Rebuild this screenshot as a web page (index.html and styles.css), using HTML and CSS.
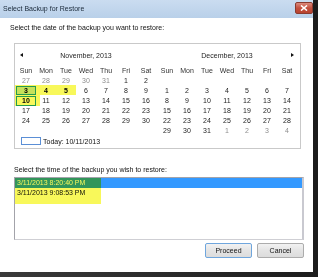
FILE: index.html
```html
<!DOCTYPE html>
<html lang="en">
<head>
    <meta charset="UTF-8">
    <title>Select Backup for Restore</title>
    <link rel="stylesheet" href="styles.css">
</head>
<body>

<div class="window">
    <div class="titlebar">
        <span class="title">Select Backup for Restore</span>
        <button class="close" aria-label="Close">
            <svg width="8" height="6" viewBox="0 0 8 6"><path d="M1 0.5 L7 5.5 M7 0.5 L1 5.5" stroke="#fff" stroke-width="1.6"/></svg>
        </button>
    </div>

    <div class="content">
        <p class="label label-date">Select the date of the backup you want to restore:</p>

        <div class="calendar">
            <div class="months">
                <div class="month">
                    <div class="month-head">
                        <span class="arrow arrow-left"></span>
                        <span class="month-name">November, 2013</span>
                        <span></span>
                    </div>
                    <div class="days">
                        <span class="dow">Sun</span><span class="dow">Mon</span><span class="dow">Tue</span><span class="dow">Wed</span><span class="dow">Thu</span><span class="dow">Fri</span><span class="dow">Sat</span>
                        <span class="other">27</span><span class="other">28</span><span class="other">29</span><span class="other">30</span><span class="other">31</span><span>1</span><span>2</span>
                        <span class="backup selected">3</span><span class="backup">4</span><span class="backup">5</span><span>6</span><span>7</span><span>8</span><span>9</span>
                        <span class="backup today">10</span><span>11</span><span>12</span><span>13</span><span>14</span><span>15</span><span>16</span>
                        <span>17</span><span>18</span><span>19</span><span>20</span><span>21</span><span>22</span><span>23</span>
                        <span>24</span><span>25</span><span>26</span><span>27</span><span>28</span><span>29</span><span>30</span>
                        <span></span><span></span><span></span><span></span><span></span><span></span><span></span>
                    </div>
                </div>
                <div class="month">
                    <div class="month-head">
                        <span></span>
                        <span class="month-name">December, 2013</span>
                        <span class="arrow arrow-right"></span>
                    </div>
                    <div class="days">
                        <span class="dow">Sun</span><span class="dow">Mon</span><span class="dow">Tue</span><span class="dow">Wed</span><span class="dow">Thu</span><span class="dow">Fri</span><span class="dow">Sat</span>
                        <span></span><span></span><span></span><span></span><span></span><span></span><span></span>
                        <span>1</span><span>2</span><span>3</span><span>4</span><span>5</span><span>6</span><span>7</span>
                        <span>8</span><span>9</span><span>10</span><span>11</span><span>12</span><span>13</span><span>14</span>
                        <span>15</span><span>16</span><span>17</span><span>18</span><span>19</span><span>20</span><span>21</span>
                        <span>22</span><span>23</span><span>24</span><span>25</span><span>26</span><span>27</span><span>28</span>
                        <span>29</span><span>30</span><span>31</span><span class="other">1</span><span class="other">2</span><span class="other">3</span><span class="other">4</span>
                    </div>
                </div>
            </div>
            <div class="today-row">
                <span class="today-box"></span>
                <span>Today: 10/11/2013</span>
            </div>

            <!-- highlighter marks -->
            <span class="marker marker-week"></span>
            <span class="marker marker-ten"></span>
        </div>

        <p class="label label-time">Select the time of the backup you wish to restore:</p>

        <div class="listbox">
            <div class="item active">3/11/2013 8:20:40 PM</div>
            <div class="item">3/11/2013 9:08:53 PM</div>
            <span class="marker marker-list"></span>
        </div>

        <div class="actions">
            <button class="btn btn-default">Proceed</button>
            <button class="btn">Cancel</button>
        </div>
    </div>
</div>

</body>
</html>
```

FILE: styles.css
```css
* {
    margin: 0;
    padding: 0;
    box-sizing: border-box;
}

html, body {
    width: 318px;
    height: 277px;
    overflow: hidden;
}

body {
    background: linear-gradient(to right, #3a3a3a, #1c1c1c);
    font-family: 'Liberation Sans', Arial, sans-serif;
    font-size: 7px;
    color: #111;
}

.window {
    width: 313px;
    height: 272px;
    background: #fff;
    display: flex;
    flex-direction: column;
}

/* title bar */

.titlebar {
    height: 18px;
    background: linear-gradient(to bottom, #cadcf0, #b9d0e9);
    display: flex;
    justify-content: space-between;
    align-items: flex-start;
    padding-left: 3px;
}

.title {
    line-height: 18px;
    color: #1b2a3a;
}

.close {
    margin-top: 2px;
    width: 18px;
    height: 12px;
    border: 1px solid #8a3b30;
    border-radius: 2px;
    background: linear-gradient(to bottom, #dc8a7c, #c4503f 50%, #b8432f);
    display: flex;
    align-items: center;
    justify-content: center;
}

/* content */

.content {
    padding: 5px 9px 0 14px;
    display: flex;
    flex-direction: column;
}

.label {
    line-height: 10px;
}

.label-date {
    margin-left: -4px;
}

.label-time {
    margin-top: 16px;
}

.calendar {
    position: relative;
    margin-top: 10px;
    width: 287px;
    border: 1px solid #c9c9c9;
    padding: 6px 2px 2px 1px;
}

.months {
    display: flex;
    gap: 1px;
}

.month {
    width: 140px;
}

.month-head {
    display: grid;
    grid-template-columns: 12px 1fr 12px;
    align-items: center;
    height: 10px;
    margin-bottom: 5px;
}

.month-name {
    text-align: center;
    color: #1e1e1e;
}

.arrow {
    width: 0;
    height: 0;
    border-top: 2.5px solid transparent;
    border-bottom: 2.5px solid transparent;
}

.arrow-left {
    border-right: 3px solid #111;
    margin-left: 4px;
}

.arrow-right {
    border-left: 3px solid #111;
    justify-self: end;
    margin-right: 3px;
}

.days {
    display: grid;
    grid-template-columns: repeat(7, 20px);
    grid-template-rows: 11px repeat(6, 10px);
}

.days span {
    text-align: center;
    line-height: 10px;
    color: #1e1e1e;
}

.days .dow {
    color: #333;
    line-height: 11px;
}

.days .other {
    color: #8d8d8d;
}

.days .backup {
    font-weight: bold;
    color: #000;
}

.days .selected {
    background: #cce8ff;
    box-shadow: inset 0 0 0 1px #26a0da;
    margin: 0 0 1px;
}

.days .today {
    box-shadow: inset 0 0 0 1px #26a0da;
}

.today-row {
    display: flex;
    align-items: center;
    gap: 2px;
    height: 10px;
    padding-left: 5px;
}

.today-box {
    width: 20px;
    height: 8px;
    border: 1px solid #5b8fd6;
}

/* highlighter */

.marker {
    position: absolute;
    background: #f8f85a;
    mix-blend-mode: multiply;
}

.marker-week {
    left: 0;
    top: 41px;
    width: 61px;
    height: 10px;
}

.marker-ten {
    left: 0;
    top: 51px;
    width: 25px;
    height: 11px;
}

.marker-list {
    left: 0;
    top: 0;
    width: 86px;
    height: 26px;
}

/* list of backup times */

.listbox {
    position: relative;
    margin-top: 2px;
    height: 63px;
    border: 1px solid #a3a3aa;
    border-right: 2px solid #c9c9d0;
    border-bottom-color: #cfcfd4;
}

.item {
    height: 10px;
    line-height: 10px;
    padding-left: 2px;
}

.item.active {
    background: #3399ff;
    color: #fff;
}

/* buttons */

.actions {
    margin-top: 3px;
    display: flex;
    justify-content: flex-end;
    gap: 5px;
}

.btn {
    width: 47px;
    height: 15px;
    font-family: inherit;
    font-size: 7px;
    color: #111;
    border: 1px solid #acacac;
    border-radius: 2px;
    background: linear-gradient(to bottom, #f2f2f2, #e4e4e4 50%, #dcdcdc);
}

.btn-default {
    border-color: #6fa6dd;
}
```
